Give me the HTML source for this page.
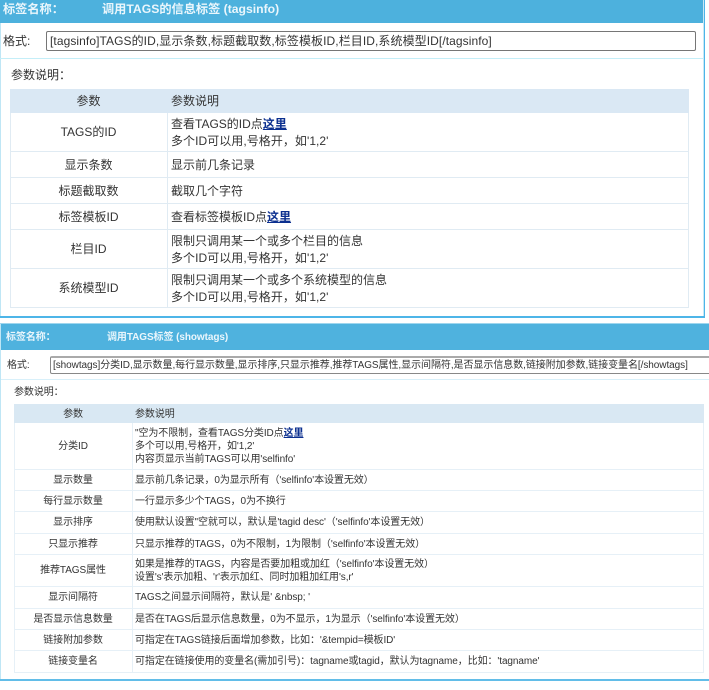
<!DOCTYPE html>
<html lang="zh">
<head>
<meta charset="utf-8">
<title>标签说明</title>
<style>
html,body{margin:0;padding:0;background:#fff;}
body{width:709px;height:690px;position:relative;overflow:hidden;font-family:"Liberation Sans","Noto Sans CJK SC",sans-serif;color:#333;}
.b{position:absolute;}
.t{position:absolute;white-space:nowrap;}
.s1 .t{font-size:12px;line-height:17px;height:17px;}
.s2 .t{font-size:10px;line-height:13px;height:13px;letter-spacing:-0.08px;}
.s1 .l{background:#e0ebf3;}
.s2 .l{background:#e6f0f7;}
.c{text-align:center;}
.h{color:#eaf6fc;font-weight:bold;}
a{color:#0b2f8f;text-decoration:underline;font-weight:bold;}
#s2{position:absolute;left:0;top:0;width:709px;height:690px;filter:blur(0.35px);}
</style>
</head>
<body>
<div class="s1">
<div class="b" style="left:0;top:0;width:703px;height:23px;background:#4db1dd"></div>
<div class="b" style="left:703px;top:0;width:1px;height:316px;background:#c8e8f5"></div>
<div class="b" style="left:704px;top:0;width:1px;height:317px;background:#4db5e8"></div>
<div class="b" style="left:0;top:23px;width:1px;height:293px;background:#bfe6f5"></div>
<div class="b" style="left:0;top:58px;width:703px;height:1px;background:#c4eef8"></div>
<div class="b" style="left:0;top:316px;width:705px;height:2px;background:#4db5e8"></div>
<div class="t h" style="left:3px;top:1px;font-size:12.2px">标签名称：</div>
<div class="t h" style="left:102px;top:1px;font-size:12.2px">调用TAGS的信息标签 (tagsinfo)</div>
<div class="t" style="left:3px;top:33px">格式:</div>
<div class="b" style="left:46px;top:31px;width:648px;height:18px;border:1px solid #767676;border-radius:2px"></div>
<div class="t" style="left:50px;top:33px;letter-spacing:0.08px">[tagsinfo]TAGS的ID,显示条数,标题截取数,标签模板ID,栏目ID,系统模型ID[/tagsinfo]</div>
<div class="t" style="left:11px;top:67px">参数说明：</div>

<div class="b" style="left:10px;top:89px;width:679px;height:24px;background:#dae8f4"></div>
<div class="b l" style="left:10px;top:113px;width:1px;height:195px"></div>
<div class="b l" style="left:688px;top:113px;width:1px;height:195px"></div>
<div class="b l" style="left:167px;top:113px;width:1px;height:195px"></div>
<div class="b l" style="left:10px;top:151px;width:679px;height:1px"></div>
<div class="b l" style="left:10px;top:177px;width:679px;height:1px"></div>
<div class="b l" style="left:10px;top:203px;width:679px;height:1px"></div>
<div class="b l" style="left:10px;top:229px;width:679px;height:1px"></div>
<div class="b l" style="left:10px;top:268px;width:679px;height:1px"></div>
<div class="b l" style="left:10px;top:307px;width:679px;height:1px"></div>

<div class="t c" style="left:10px;width:157px;top:93px">参数</div>
<div class="t" style="left:171px;top:93px">参数说明</div>
<div class="t c" style="left:10px;width:157px;top:124px">TAGS的ID</div>
<div class="t" style="left:171px;top:116px">查看TAGS的ID点<a>这里</a></div>
<div class="t" style="left:171px;top:133px;letter-spacing:0.05px">多个ID可以用,号格开，如'1,2'</div>
<div class="t c" style="left:10px;width:157px;top:157px">显示条数</div>
<div class="t" style="left:171px;top:157px">显示前几条记录</div>
<div class="t c" style="left:10px;width:157px;top:183px">标题截取数</div>
<div class="t" style="left:171px;top:183px">截取几个字符</div>
<div class="t c" style="left:10px;width:157px;top:209px">标签模板ID</div>
<div class="t" style="left:171px;top:209px">查看标签模板ID点<a>这里</a></div>
<div class="t c" style="left:10px;width:157px;top:241px">栏目ID</div>
<div class="t" style="left:171px;top:233px">限制只调用某一个或多个栏目的信息</div>
<div class="t" style="left:171px;top:250px;letter-spacing:0.05px">多个ID可以用,号格开，如'1,2'</div>
<div class="t c" style="left:10px;width:157px;top:280px">系统模型ID</div>
<div class="t" style="left:171px;top:272px">限制只调用某一个或多个系统模型的信息</div>
<div class="t" style="left:171px;top:289px;letter-spacing:0.05px">多个ID可以用,号格开，如'1,2'</div>
</div>

<div id="s2" class="s2">
<div class="b" style="left:0;top:323px;width:709px;height:1px;background:#9fd6ee"></div>
<div class="b" style="left:1px;top:324px;width:708px;height:26px;background:#4fb2de"></div>
<div class="b" style="left:0;top:324px;width:1px;height:356px;background:#bfe6f5"></div>
<div class="b" style="left:1px;top:379px;width:708px;height:1px;background:#d8f0fa"></div>
<div class="b" style="left:0;top:679px;width:709px;height:2px;background:#62bde8"></div>
<div class="t h" style="left:6px;top:331px;font-size:10px">标签名称：</div>
<div class="t h" style="left:107px;top:331px;font-size:10px">调用TAGS标签 (showtags)</div>
<div class="t" style="left:7px;top:359px">格式:</div>
<div class="b" style="left:50px;top:356px;width:680px;height:15px;border:1px solid #888;border-top:2px solid #aaa;border-radius:2px"></div>
<div class="t" style="left:53px;top:359px;letter-spacing:-0.06px">[showtags]分类ID,显示数量,每行显示数量,显示排序,只显示推荐,推荐TAGS属性,显示间隔符,是否显示信息数,链接附加参数,链接变量名[/showtags]</div>
<div class="t" style="left:14px;top:386px">参数说明：</div>

<div class="b" style="left:14px;top:404px;width:690px;height:19px;background:#d9e8f3"></div>
<div class="b l" style="left:14px;top:423px;width:1px;height:250px"></div>
<div class="b l" style="left:703px;top:423px;width:1px;height:250px"></div>
<div class="b l" style="left:132px;top:423px;width:1px;height:250px"></div>
<div class="b l" style="left:14px;top:469px;width:690px;height:1px"></div>
<div class="b l" style="left:14px;top:490px;width:690px;height:1px"></div>
<div class="b l" style="left:14px;top:511px;width:690px;height:1px"></div>
<div class="b l" style="left:14px;top:533px;width:690px;height:1px"></div>
<div class="b l" style="left:14px;top:554px;width:690px;height:1px"></div>
<div class="b l" style="left:14px;top:586px;width:690px;height:1px"></div>
<div class="b l" style="left:14px;top:608px;width:690px;height:1px"></div>
<div class="b l" style="left:14px;top:629px;width:690px;height:1px"></div>
<div class="b l" style="left:14px;top:650px;width:690px;height:1px"></div>
<div class="b l" style="left:14px;top:672px;width:690px;height:1px"></div>

<div class="t c" style="left:14px;width:118px;top:408px">参数</div>
<div class="t" style="left:135px;top:408px">参数说明</div>
<div class="t c" style="left:14px;width:118px;top:440px">分类ID</div>
<div class="t" style="left:135px;top:427px">"空为不限制，查看TAGS分类ID点<a>这里</a></div>
<div class="t" style="left:135px;top:440px">多个可以用,号格开，如'1,2'</div>
<div class="t" style="left:135px;top:453px">内容页显示当前TAGS可以用'selfinfo'</div>
<div class="t c" style="left:14px;width:118px;top:474px">显示数量</div>
<div class="t" style="left:135px;top:474px">显示前几条记录，0为显示所有（'selfinfo'本设置无效）</div>
<div class="t c" style="left:14px;width:118px;top:495px">每行显示数量</div>
<div class="t" style="left:135px;top:495px">一行显示多少个TAGS，0为不换行</div>
<div class="t c" style="left:14px;width:118px;top:516px">显示排序</div>
<div class="t" style="left:135px;top:516px">使用默认设置"空就可以，默认是'tagid desc'（'selfinfo'本设置无效）</div>
<div class="t c" style="left:14px;width:118px;top:538px">只显示推荐</div>
<div class="t" style="left:135px;top:538px">只显示推荐的TAGS，0为不限制，1为限制（'selfinfo'本设置无效）</div>
<div class="t c" style="left:14px;width:118px;top:564px">推荐TAGS属性</div>
<div class="t" style="left:135px;top:558px">如果是推荐的TAGS，内容是否要加粗或加红（'selfinfo'本设置无效）</div>
<div class="t" style="left:135px;top:571px">设置's'表示加粗、'r'表示加红、同时加粗加红用's,r'</div>
<div class="t c" style="left:14px;width:118px;top:591px">显示间隔符</div>
<div class="t" style="left:135px;top:591px">TAGS之间显示间隔符，默认是' &amp;nbsp; '</div>
<div class="t c" style="left:14px;width:118px;top:613px">是否显示信息数量</div>
<div class="t" style="left:135px;top:613px">是否在TAGS后显示信息数量，0为不显示，1为显示（'selfinfo'本设置无效）</div>
<div class="t c" style="left:14px;width:118px;top:634px">链接附加参数</div>
<div class="t" style="left:135px;top:634px">可指定在TAGS链接后面增加参数，比如：'&amp;tempid=模板ID'</div>
<div class="t c" style="left:14px;width:118px;top:655px">链接变量名</div>
<div class="t" style="left:135px;top:655px">可指定在链接使用的变量名(需加引号)：tagname或tagid，默认为tagname，比如：'tagname'</div>
</div>
</body>
</html>
